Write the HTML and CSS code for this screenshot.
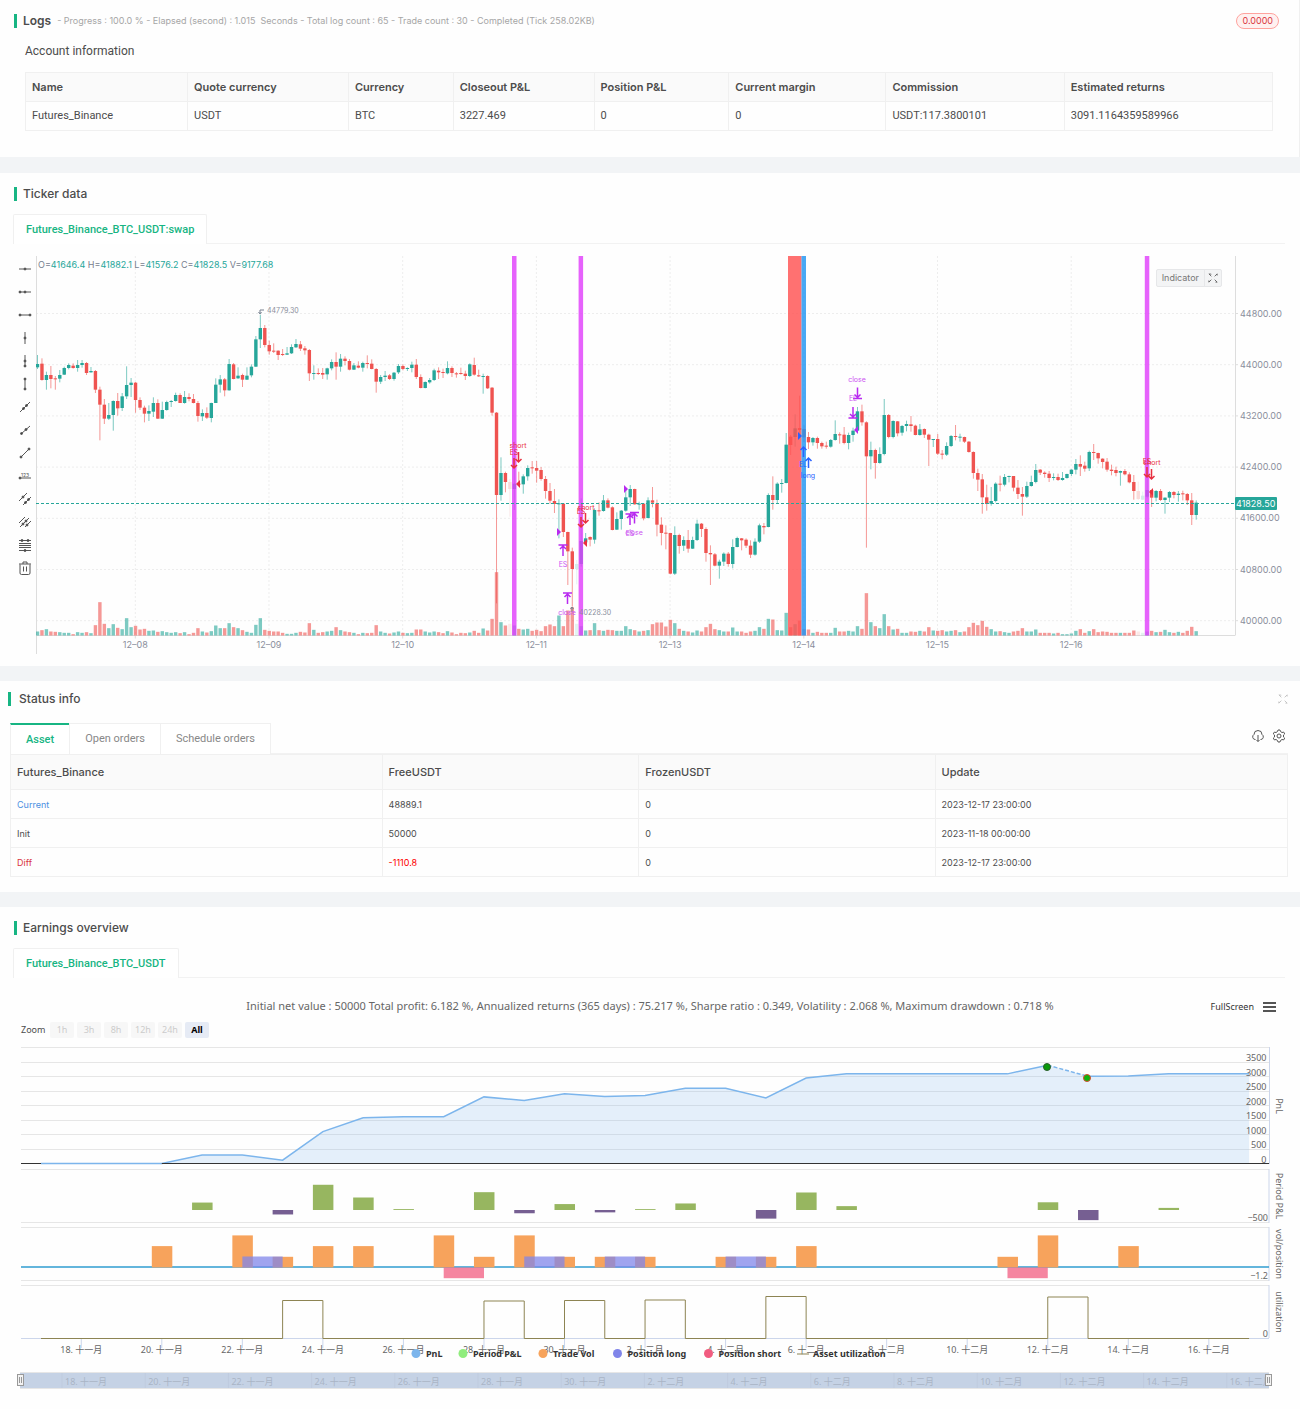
FILE: index.html
```html
<!DOCTYPE html>
<html lang="en">
<head>
  <meta charset="UTF-8">
  <title>Backtest</title>
  <link rel="stylesheet" href="styles.css">
</head>
<body>
<section class="panel logs">
  <header class="panel-head">
    <h2>Logs</h2>
    <span class="progress">- Progress : 100.0 % - Elapsed (second) : 1.015&nbsp; Seconds - Total log count : 65 - Trade count : 30 - Completed (Tick 258.02KB)</span>
    <span class="badge">0.0000</span>
  </header>
  <h3>Account information</h3>
  <table class="grid account">
    <thead>
      <tr><th>Name</th><th>Quote currency</th><th>Currency</th><th>Closeout P&amp;L</th><th>Position P&amp;L</th><th>Current margin</th><th>Commission</th><th>Estimated returns</th></tr>
    </thead>
    <tbody>
      <tr><td>Futures_Binance</td><td>USDT</td><td>BTC</td><td>3227.469</td><td>0</td><td>0</td><td>USDT:117.3800101</td><td>3091.1164359589966</td></tr>
    </tbody>
  </table>
</section>

<section class="panel ticker">
  <header class="panel-head"><h2>Ticker data</h2></header>
  <div class="tabs"><button type="button" class="tab">Futures_Binance_BTC_USDT:swap</button></div>
  <div class="chart-row">
    <div class="tools">
      <button type="button" aria-label="Horizontal line"><svg viewBox="0 0 14 14"><path d="M1 7h12"/><circle cx="7" cy="7" r="1"/></svg></button>
      <button type="button" aria-label="Horizontal ray"><svg viewBox="0 0 14 14"><path d="M1 7h12"/><circle cx="2" cy="7" r="1"/><circle cx="7" cy="7" r="1"/></svg></button>
      <button type="button" aria-label="Horizontal segment"><svg viewBox="0 0 14 14"><path d="M1 7h12"/><circle cx="2" cy="7" r="1"/><circle cx="12" cy="7" r="1"/></svg></button>
      <button type="button" aria-label="Vertical line"><svg viewBox="0 0 14 14"><path d="M7 1v12"/><circle cx="7" cy="7" r="1"/></svg></button>
      <button type="button" aria-label="Vertical ray"><svg viewBox="0 0 14 14"><path d="M7 1v12"/><circle cx="7" cy="7" r="1"/><circle cx="7" cy="12" r="1"/></svg></button>
      <button type="button" aria-label="Vertical segment"><svg viewBox="0 0 14 14"><path d="M7 1v12"/><circle cx="7" cy="2" r="1"/><circle cx="7" cy="12" r="1"/></svg></button>
      <button type="button" aria-label="Straight line"><svg viewBox="0 0 14 14"><path d="M2 12l10-10"/><circle cx="5.5" cy="8.5" r="1"/><circle cx="8.5" cy="5.5" r="1"/></svg></button>
      <button type="button" aria-label="Ray"><svg viewBox="0 0 14 14"><path d="M3 11l9-8"/><circle cx="3.5" cy="10.5" r="1"/><circle cx="8" cy="6.5" r="1"/></svg></button>
      <button type="button" aria-label="Segment"><svg viewBox="0 0 14 14"><path d="M3 11l8-8"/><circle cx="3" cy="11" r="1"/><circle cx="11" cy="3" r="1"/></svg></button>
      <button type="button" aria-label="Price line"><svg viewBox="0 0 14 14"><path d="M1 9h12"/><circle cx="2" cy="9" r="1"/><text x="3" y="8">123</text></svg></button>
      <button type="button" aria-label="Parallel lines"><svg viewBox="0 0 14 14"><path d="M1 9l8-8M5 13l8-8"/><circle cx="5" cy="5" r="1"/><circle cx="7.5" cy="10.5" r="1"/><circle cx="10.5" cy="7.5" r="1"/></svg></button>
      <button type="button" aria-label="Price channel"><svg viewBox="0 0 14 14"><path d="M1 8l6-6M2 12l9-9M7 12l6-6"/><circle cx="5" cy="9" r="1"/><circle cx="8" cy="6" r="1"/><circle cx="9" cy="10" r="1"/></svg></button>
      <button type="button" aria-label="Fibonacci lines"><svg viewBox="0 0 14 14"><path d="M1 2.5h12M1 5.5h12M1 7.5h12M1 9.5h12M1 12.5h12"/><circle cx="4" cy="2.5" r="1"/><circle cx="10" cy="2.5" r="1"/><circle cx="7" cy="12.5" r="1"/></svg></button>
      <button type="button" aria-label="Remove all"><svg viewBox="0 0 14 14"><path d="M1 3h12M5 3V1h4v2M2 3.5V12q0 1.5 1.5 1.5h7Q12 13.5 12 12V3.5M5.5 5.5v5M8.5 5.5v5"/></svg></button>
    </div>
    <svg class="kline" id="kline" viewBox="0 0 1252 400"></svg>
    <div class="chart-btns">
      <button type="button">Indicator</button>
      <button type="button" aria-label="Full screen"><svg viewBox="0 0 12 12"><path d="M1 1l3 3M4 1.5L1.500 1M11 1L8 4M11 1v2M1 11l3-3M1 11V9M11 11L8 8M11 11H9"/></svg></button>
    </div>
  </div>
</section>

<section class="panel status">
  <header class="panel-head">
    <h2>Status info</h2>
    <button type="button" class="icon-btn shrink" aria-label="Full screen"><svg viewBox="0 0 12 12"><path d="M1 1l3 3M4 1.500L1.500 1M11 1L8 4M11 1v2M1 11l3-3M1 11V9M11 11L8 8M11 11H9"/></svg></button>
  </header>
  <div class="tabs card-tabs">
    <button type="button" class="tab active">Asset</button>
    <button type="button" class="tab">Open orders</button>
    <button type="button" class="tab">Schedule orders</button>
    <div class="tab-icons">
      <button type="button" class="icon-btn" aria-label="Download"><svg viewBox="0 0 14 14"><path d="M4.5 10.5H4A2.700 2.700 0 0 1 3 5.500a4 4 0 0 1 8 0 2.700 2.700 0 0 1-1 5h-.5M7 6v6.500M5.500 11L7 12.500 8.500 11"/></svg></button>
      <button type="button" class="icon-btn" aria-label="Settings"><svg viewBox="0 0 14 14"><path d="M5.5 2.5L6 1h2l.5 1.5 1.5 1 1.700-.4 1 1.800L11.500 6v2l1.200 1.100-1 1.800-1.700-.4-1.500 1L8 13H6l-.5-1.500-1.500-1-1.700.4-1-1.800L2.500 8V6L1.300 4.900l1-1.800 1.700.4z"/><circle cx="7" cy="7" r="2"/></svg></button>
    </div>
  </div>
  <table class="grid assets">
    <thead>
      <tr><th>Futures_Binance</th><th>FreeUSDT</th><th>FrozenUSDT</th><th>Update</th></tr>
    </thead>
    <tbody>
      <tr><td class="blue">Current</td><td>48889.1</td><td>0</td><td>2023-12-17 23:00:00</td></tr>
      <tr><td>Init</td><td>50000</td><td>0</td><td>2023-11-18 00:00:00</td></tr>
      <tr><td class="red">Diff</td><td class="loss">-1110.8</td><td>0</td><td>2023-12-17 23:00:00</td></tr>
    </tbody>
  </table>
</section>

<section class="panel earnings">
  <header class="panel-head"><h2>Earnings overview</h2></header>
  <div class="tabs"><button type="button" class="tab">Futures_Binance_BTC_USDT</button></div>
  <div class="title-row">
    <p>Initial net value : 50000 Total profit: 6.182 %, Annualized returns (365 days) : 75.217 %, Sharpe ratio : 0.349, Volatility : 2.068 %, Maximum drawdown : 0.718 %</p>
    <div class="export">
      <button type="button">FullScreen</button>
      <button type="button" class="burger" aria-label="Menu"><i></i><i></i><i></i></button>
    </div>
  </div>
  <div class="range">
    <span>Zoom</span>
    <button type="button" disabled>1h</button>
    <button type="button" disabled>3h</button>
    <button type="button" disabled>8h</button>
    <button type="button" disabled>12h</button>
    <button type="button" disabled>24h</button>
    <button type="button" class="on">All</button>
  </div>
  <svg class="pnl" id="pnl" viewBox="0 0 1300 360"></svg>
</section>
<script src="script.js"></script>
</body>
</html>
```
FILE: styles.css
```css
* {
  box-sizing: border-box;
}

body {
  margin: 0;
  background: #f2f4f6;
  color: #4c4c4c;
  font: 11px/20px Inter, "Liberation Sans", sans-serif;
}

button {
  margin: 0;
  padding: 0;
  border: 0;
  background: none;
  color: inherit;
  font: inherit;
}

.panel {
  background: #fefefe;
  margin-bottom: 15px;
  padding-top: 11px;
}

.panel:last-of-type {
  margin-bottom: 0;
}

.panel-head {
  display: flex;
  align-items: center;
  height: 20px;
  margin: 0 22px 0 14px;
}

.panel-head h2 {
  margin: 0;
  font-size: 12px;
  font-weight: 500;
  line-height: 14px;
  padding-left: 6px;
  border-left: 3px solid #17b583;
}

.progress {
  margin-left: 6px;
  font-size: 9px;
  color: #a6a6a6;
}

.badge {
  margin-left: auto;
  padding: 0 5px;
  border: 1px solid #ffa39e;
  border-radius: 8px;
  background: #fff1f0;
  color: #d9363e;
  font-size: 9px;
  line-height: 14px;
}

/* logs */
.logs {
  padding-bottom: 26px;
  margin-bottom: 16px;
  border-right: 1px solid #f0f0f0;
}

.logs .panel-head h2 {
  font-weight: 600;
}

.logs .panel-head {
  margin-right: 20px;
}

.logs h3 {
  margin: 10px 25px 11px;
  font-family: Roboto, sans-serif;
  font-size: 12px;
  font-weight: 400;
  line-height: 20px;
}

.logs .grid {
  margin: 0 26px 0 25px;
  width: calc(100% - 51px);
}

/* tables */
.grid {
  border-collapse: collapse;
  table-layout: fixed;
  width: 100%;
}

.grid th,
.grid td {
  height: 29px;
  padding: 0 6px;
  border: 1px solid #f0f0f0;
  text-align: left;
  font-weight: 400;
  line-height: 14px;
}

.grid th {
  background: #fafafa;
  font-weight: 600;
}

.account td {
  font-family: Roboto, sans-serif;
}

.account th:nth-child(1) { width: 13%; }
.account th:nth-child(2) { width: 12.9%; }
.account th:nth-child(3) { width: 8.4%; }
.account th:nth-child(4) { width: 11.3%; }
.account th:nth-child(5) { width: 10.8%; }
.account th:nth-child(6) { width: 12.6%; }
.account th:nth-child(7) { width: 14.3%; }

.assets th {
  height: 35px;
  font-weight: 500;
}

.assets td {
  padding-top: 1px;
  font-size: 9px;
}

.assets th:nth-child(1) { width: 29.1%; }
.assets th:nth-child(2) { width: 20.1%; }
.assets th:nth-child(3) { width: 23.2%; }

.blue { color: #4a90e2; }
.red { color: #d9363e; }
.loss { color: #ff0000; }

/* tabs */
.tabs {
  display: flex;
  height: 30px;
  margin: 10px 15px 0 13px;
  box-shadow: inset 0 -1px #f2f2f2;
}

.tab {
  padding: 0 12px;
  border: 1px solid #f0f0f0;
  border-bottom: 0;
  border-radius: 2px 2px 0 0;
  background: #fff;
  color: #17b583;
  font-family: Roboto, sans-serif;
  font-weight: 500;
}

.card-tabs {
  height: 31px;
  margin: 14px 0 0;
}

.card-tabs .tab {
  padding: 0 15px;
  margin-right: -1px;
  border-radius: 0;
  color: #888;
  font-weight: 400;
}

.card-tabs .active {
  border-top: 2px solid #17b583;
  color: #17b583;
  font-weight: 500;
}

.tab-icons {
  display: flex;
  align-items: center;
  gap: 7px;
  margin: 0 2px 5px auto;
}

.icon-btn {
  height: 14px;
}

.icon-btn svg {
  display: block;
  width: 14px;
  height: 14px;
  fill: none;
  stroke: #555;
}

.shrink {
  margin-left: auto;
}

.shrink svg {
  width: 10px;
  stroke: #bbb;
}

.status {
  padding: 8px 12px 15px 10px;
}

.status .panel-head {
  margin: 0 0 0 -2px;
}

.status .panel-head h2 {
  padding-left: 8px;
}

/* candle chart */
.chart-row {
  position: relative;
  display: flex;
  margin: 12px 12px 0 18px;
  padding-bottom: 10px;
}

.tools {
  flex: none;
  width: 18px;
  padding-top: 6px;
}

.tools button {
  display: block;
  width: 14px;
  height: 14px;
  margin-bottom: 9px;
}

.tools svg {
  display: block;
  width: 14px;
  height: 14px;
  fill: none;
  stroke: #555;
}

.tools circle {
  fill: #444;
}

.tools text {
  fill: #555;
  stroke: none;
  font-size: 5px;
}

.kline {
  display: block;
  flex: 1;
  min-width: 0;
  font-size: 9px;
}

.chart-btns {
  position: absolute;
  top: 13px;
  right: 66px;
  display: flex;
  border: 1px solid #e6e7e9;
  border-radius: 2px;
  background: #f3f4f5;
  color: #777;
  font-size: 9px;
  line-height: 16px;
}

.chart-btns button {
  padding: 0 5px;
  height: 16px;
}

.chart-btns button + button {
  border-left: 1px solid #e6e7e9;
  padding: 0 3px;
}

.chart-btns svg {
  display: block;
  width: 10px;
  height: 10px;
  fill: none;
  stroke: #555;
}

.up { fill: #26a69a; }
.down { fill: #ef5350; }
.wick { opacity: .6; }
.vol { opacity: .6; }
.faded { opacity: .2; }
.hgrid { stroke: #ededed; stroke-dasharray: 2 2; }
.axis { stroke: #dddddd; }
.axis-text { fill: #8a8e9c; }
.peak { font-size: 7px; }
.last-line { stroke: #26a69a; stroke-dasharray: 3 2; }
.last-tag { fill: #26a69a; }
.last-text { fill: #fff; }
.ohlc { fill: #26a69a; }
.ohlc .k { fill: #76808f; }
.band-m { fill: #e040fb; opacity: .82; }
.band-r { fill: #ff5252; opacity: .82; }
.band-b { fill: #2196f3; opacity: .82; }
.mark { fill: none; stroke-width: 1.5; }
.mark-text { font-size: 7px; text-anchor: middle; }
.s-red { stroke: #e8303f; }
.s-violet { stroke: #b82af0; }
.s-blue { stroke: #2962ff; }
.f-red { fill: #e8303f; }
.f-violet { fill: #b82af0; }
.f-blue { fill: #2962ff; }
.mark-text.f-violet { fill: #cc55f2; }

/* earnings chart */
.earnings {
  padding-bottom: 9px;
}

.title-row,
.range,
.pnl {
  font-family: "Noto Sans", "Noto Sans CJK SC", sans-serif;
}

.title-row {
  position: relative;
  margin-top: 18px;
}

.title-row p {
  margin: 0;
  text-align: center;
  font-size: 11px;
  color: #666;
}

.export {
  position: absolute;
  top: 1px;
  right: 24px;
  display: flex;
  align-items: center;
  gap: 9px;
  color: #333;
  font-size: 9px;
}

.burger {
  display: flex;
  flex-direction: column;
  gap: 2px;
}

.burger i {
  width: 13px;
  height: 2px;
  background: #555;
}

.range {
  display: flex;
  gap: 3px;
  margin: 6px 21px 2px;
  font-size: 9px;
  line-height: 16px;
}

.range span {
  width: 26px;
}

.range button {
  width: 24px;
  height: 16px;
  border-radius: 2px;
  background: #f7f7f7;
  color: #ccc;
}

.range .on {
  background: #e6ebf5;
  color: #000;
  font-weight: 700;
}

.pnl {
  display: block;
  width: 100%;
  font-size: 9px;
  fill: #666;
}

.mid { text-anchor: middle; }
.end { text-anchor: end; }
.grid-line { stroke: #e6e6e6; }
.y-line { stroke: #ccd6eb; }
.zero { stroke: #333; }
.area { fill: #7cb5ec; opacity: .2; }
.line { fill: none; stroke: #7cb5ec; stroke-width: 1.5; }
.dash { stroke-dasharray: 4 2; }
.gain { fill: #97b660; }
.lose { fill: #765f92; }
.trade { fill: #f7a35c; }
.long { fill: #8085e9; opacity: .75; }
.short { fill: #f15c80; opacity: .75; }
.vol-zero { stroke: #2f9dd0; stroke-width: 1.5; }
.util { fill: none; stroke: #8d8453; }
.legend { font-weight: 700; fill: #333; }
.nav { fill: #c5d2e5; }
.nav-text { fill: #aab5c5; }
.nav-line { stroke: #bfcbde; }
.handle { fill: #f2f2f2; stroke: #999; }
.grip { stroke: #999; }
```
FILE: script.js
```js
const add = (parent, tag, attrs, text) => {
  const el = document.createElementNS("http://www.w3.org/2000/svg", tag);
  for (const key in attrs) el.setAttribute(key, attrs[key]);
  if (text !== undefined) el.textContent = text;
  parent.appendChild(el);
  return el;
};

const line = (parent, x1, y1, x2, y2, cls) => add(parent, "line", { x1, y1, x2, y2, class: cls });
const rect = (parent, x, y, width, height, cls) => add(parent, "rect", { x, y, width, height, class: cls });
const text = (parent, x, y, cls, str) => add(parent, "text", { x, y, class: cls }, str);

/* ---------- candles ---------- */

// open close high low volume, in thirds of a pixel (smaller is a higher price)
const candles = `
367 357 330 372 12|356 405 340 407 16|405 390 380 434 19|390 402 363 430 12|400 401 393 434 11|401 390 375 412 10
389 369 365 390 8|369 360 355 373 8|362 369 355 371 4|369 360 345 380 10|360 354 345 368 8|354 384 351 390 10
382 378 366 383 7|378 434 375 444 31|434 479 425 586 100|479 521 462 537 35|521 510 474 525 22|510 468 466 557 34
468 490 444 512 23|489 454 444 498 19|454 420 364 462 52|420 413 399 456 25|413 465 411 503 29|465 488 457 495 18
488 506 482 532 20|506 498 481 528 14|500 474 457 516 15|474 521 463 522 11|521 495 470 522 13|495 471 467 497 10
470 468 465 486 8|468 450 443 470 10|450 474 445 474 7|474 456 438 476 10|456 462 445 469 4|462 474 447 475 8
474 513 468 530 22|514 504 493 528 12|504 518 487 522 9|519 474 473 532 13|474 419 400 474 30|419 403 390 443 22
403 436 399 454 22|436 357 342 437 37|358 402 354 403 25|400 392 367 402 22|390 404 386 426 16|404 392 367 405 11
391 365 358 397 8|365 283 273 366 32|283 249 209 309 52|249 300 240 307 17|300 319 287 329 14|317 320 295 324 12
317 330 316 345 12|327 330 312 333 8|329 325 306 330 5|325 306 298 327 5|307 297 282 309 8|298 311 288 318 11
310 316 303 329 9|315 385 312 408 37|387 384 361 404 17|384 386 370 390 8|384 389 369 402 10|388 370 368 404 12
370 351 343 376 14|351 365 322 404 25|365 341 327 380 16|341 348 334 361 12|348 374 342 376 10|374 361 354 375 8
362 368 349 370 4|368 354 350 380 8|354 356 331 370 7|356 372 343 373 8|372 410 369 443 31|410 396 390 417 12
396 392 378 408 8|391 402 387 405 6|402 383 381 407 9|382 363 357 387 12|363 372 358 376 8|372 369 367 378 7
369 359 350 382 8|359 396 342 402 18|396 429 388 430 18|429 411 409 430 12|412 405 399 416 9|405 376 371 408 12
377 382 367 402 10|381 384 371 399 7|385 369 349 388 13|369 384 364 396 9|385 387 381 398 4|384 386 368 389 8
386 393 377 405 7|393 358 355 396 9|360 389 338 392 14|391 394 374 396 8|395 393 386 446 21|393 430 391 432 15
428 503 426 512 50|503 750 501 1075 190|750 684 637 767 40|684 711 680 742 30|711 732 702 815 35|732 716 590 795 30
716 718 680 720 20|718 694 688 746 18|694 669 661 707 20|667 669 648 686 14|669 677 648 713 17|675 702 666 707 13
702 738 693 761 28|738 767 714 776 33|768 777 732 804 28|777 775 763 880 60|776 861 776 876 28|861 919 860 1020 75
919 972 908 1085 85|972 957 945 1018 35|957 888 760 965 28|892 880 864 893 15|876 884 874 904 16|884 795 790 896 37
796 798 772 812 16|798 766 750 800 14|766 788 760 790 17|787 855 784 856 16|854 822 802 855 14|822 797 795 854 14
797 757 733 800 28|757 732 720 783 19|732 778 731 779 16|778 776 770 794 12|776 820 774 826 14|819 766 757 820 16
766 773 726 787 34|776 839 764 874 39|839 864 817 901 39|863 866 841 913 27|864 986 864 988 47|986 870 844 990 37
870 903 866 926 20|902 885 874 918 14|885 911 855 923 12|911 885 875 912 9|885 836 824 888 15|836 852 834 876 12
852 924 847 950 25|924 928 901 1020 35|928 962 924 964 19|962 950 944 1001 16|950 926 922 963 12|926 957 921 965 12
957 906 883 970 24|906 879 875 907 12|880 886 879 916 12|884 902 880 909 8|902 929 886 939 12|929 890 880 932 14
890 841 836 894 25|843 847 834 868 20|846 750 745 847 50|750 765 694 794 48|765 716 712 776 16|716 714 702 743 15
714 599 564 715 68|575 600 570 630 25|576 550 508 605 34|549 555 452 575 45|552 577 541 592 19|576 592 561 612 18
592 579 576 602 8|579 594 575 611 11|594 604 590 611 8|602 605 590 611 8|605 585 582 608 8|585 567 526 587 23
568 570 562 596 12|569 594 546 598 12|594 570 563 613 14|570 557 548 590 12|557 499 486 560 28|499 532 479 542 20
532 634 529 908 127|634 615 590 673 40|615 654 611 701 28|654 627 607 656 22|627 510 462 631 64|510 576 507 580 28
576 528 526 580 18|529 565 528 574 20|563 543 540 572 8|543 537 527 559 8|538 543 513 560 12|542 570 539 571 11
570 553 537 572 14|552 569 550 579 12|569 584 566 663 25|584 582 582 606 15|582 626 567 630 14|626 629 615 643 16
629 603 592 633 12|603 573 570 606 14|573 576 540 586 16|577 575 566 590 10|576 590 575 594 12|590 621 588 623 25
621 684 619 701 38|684 704 671 738 31|703 757 687 806 44|757 777 719 797 26|776 768 726 782 19|768 716 712 772 12
716 719 692 739 13|719 696 687 724 10|696 693 692 712 8|693 728 693 739 12|728 747 705 762 14|747 755 726 812 22
755 723 710 759 12|723 711 692 725 12|711 675 657 715 18|674 683 672 690 8|683 687 679 698 8|686 699 678 711 8
699 696 685 706 6|696 705 686 708 8|705 699 681 707 4|699 687 686 701 4|687 674 673 693 6|674 657 642 688 14
657 665 631 693 19|662 671 650 680 8|670 621 617 678 13|621 624 597 645 19|624 640 623 656 10|641 651 640 670 12
650 674 639 680 11|674 678 659 691 8|675 684 665 694 8|683 678 677 722 8|678 688 672 691 8|688 712 682 715 8
711 738 690 764 15|738 762 710 765 12|764 752 740 765 8|755 735 615 760 12|735 758 735 786 14|758 738 735 769 10
738 765 732 768 11|765 758 757 806 17|758 741 738 771 10|741 750 738 760 8|750 746 738 770 11|745 748 737 766 8
747 766 744 780 14|766 810 744 840 26|810 773 766 824 13`
  .trim().split(/[|\n]/).map(row => row.split(" ").map(Number));

const faded = [106, 121, 247, 248];
const STEP = 4.4565;
const FLOOR = 379.5;
const kline = document.querySelector("#kline");
const py = v => v / 3 - 11;

const drawKline = () => {
  // grid and axes
  for (let i = 0; i < 7; i++) {
    const y = 57.5 + i * 51.2;
    line(kline, 0, y, 1199, y, "hgrid");
    line(kline, 1199, y, 1202, y, "axis");
    text(kline, 1204, y + 3, "axis-text", (44800 - i * 800) + ".00");
  }
  ["08", "09", "10", "11", "13", "14", "15", "16"].forEach((d, i) => {
    const x = 99.3 + i * 133.7;
    line(kline, x, 0, x, FLOOR, "hgrid");
    line(kline, x, FLOOR, x, FLOOR + 3, "axis");
    text(kline, x, 392, "axis-text mid", "12\u2013" + d);
  });
  line(kline, 0, FLOOR, 1199, FLOOR, "axis");
  line(kline, 0.5, 0, 0.5, 398, "axis");
  line(kline, 1199.5, 0, 1199.5, FLOOR, "axis");

  candles.forEach(([open, close, high, low, vol], i) => {
    const x = 1.5 + i * STEP;
    const dir = open > close ? "up" : "down";
    const g = add(kline, "g", { class: dir + (faded.includes(i) ? " faded" : "") });
    rect(g, x - 1.7, FLOOR - vol / 3, 3.4, vol / 3, "vol");
    rect(g, x - 0.5, py(high), 1, (low - high) / 3, "wick");
    rect(g, x - 1.7, py(Math.min(open, close)), 3.4, Math.max(Math.abs(open - close) / 3, 1), "body");
  });

  rect(kline, 476, 0, 4.5, FLOOR, "band-m");
  rect(kline, 542.6, 0, 4.5, FLOOR, "band-m");
  rect(kline, 752, 0, 13.5, FLOOR, "band-r");
  rect(kline, 765.5, 0, 4.5, FLOOR, "band-b");
  rect(kline, 1108.8, 0, 4.5, FLOOR, "band-m");

  line(kline, 0, 247.5, 1199, 247.5, "last-line");
  add(kline, "rect", { x: 1199, y: 241, width: 42, height: 13, rx: 1, class: "last-tag" });
  text(kline, 1200, 251, "last-text", "41828.50");

  const legend = add(kline, "text", { x: 2, y: 12, class: "ohlc" });
  [["O", "41646.4"], ["H", "41882.1"], ["L", "41576.2"], ["C", "41828.5"], ["V", "9177.68"]].forEach(([k, v]) => {
    add(legend, "tspan", { class: "k" }, k + "=");
    add(legend, "tspan", {}, v + " ");
  });

  // highest and lowest price
  const peak = { fill: "none", stroke: "#76808f" };
  add(kline, "path", { d: "M224 57v-3h4M222.5 56l1.5 2 1.5-2", ...peak });
  text(kline, 231, 57, "axis-text peak", "44779.30");
  add(kline, "path", { d: "M536 351v5M534.5 353l1.5-2 1.5 2", ...peak });
  text(kline, 543, 359, "axis-text peak", "40228.30");

  // arrows: x, y of the head, direction, colour, bar at the head
  [
    [478, 213, 1, "red"], [482.5, 207, 1, "red"],
    [545, 272, 1, "red"], [549.5, 268, 1, "red"],
    [527, 289, -1, "violet", 1], [531.5, 337, -1, "violet", 1],
    [594, 258, -1, "violet", 1], [598.5, 256.5, -1, "violet", 1],
    [817, 162, 1, "violet", 1], [821.5, 142.5, 1, "violet", 1],
    [767.5, 190, -1, "blue"], [772.5, 201, -1, "blue"],
    [1111, 222, 1, "red"], [1115.5, 224, 1, "red"],
  ].forEach(([x, y, dir, color, bar]) => {
    let d = `M${x} ${y - dir * 11}V${y - dir}M${x - 3} ${y - dir * 4}L${x} ${y - dir}L${x + 3} ${y - dir * 4}`;
    if (bar) d += `M${x - 4.5} ${y}h9`;
    add(kline, "path", { d, class: "mark s-" + color });
  });

  // fill price pointers
  [
    [480, 228, 1, "red"], [547, 287, 1, "red"], [1113, 236, 1, "red"],
    [525, 276, -1, "violet"], [592, 233, -1, "violet"], [818, 174, 1, "violet"], [766, 180, -1, "blue"],
  ].forEach(([x, y, dir, color]) => {
    add(kline, "path", { d: `M${x} ${y}l${dir * 4} -4v8z`, class: "f-" + color });
  });

  [
    [482, 192, "red", "short"], [478, 199, "red", "ES"],
    [550, 254, "red", "short"], [545, 258, "red", "ES"],
    [527, 311, "violet", "ES"], [531, 359, "violet", "close"],
    [598, 279, "violet", "close"], [594, 280, "violet", "ES"],
    [821, 126, "violet", "close"], [817, 145, "violet", "EL"],
    [767, 211, "blue", "EL"], [772, 222, "blue", "long"],
    [1111, 208, "red", "ES"], [1116, 209, "red", "short"],
  ].forEach(([x, y, color, str]) => text(kline, x, y, "mark-text f-" + color, str));
};

/* ---------- earnings ---------- */

const pnl = document.querySelector("#pnl");
const pnlData = [0, 0, 0, 0, 290, 290, 116, 1100, 1577, 1612, 1612, 2297, 2175, 2401, 2309, 2343, 2598, 2598, 2262, 2945,
  3091, 3091, 3091, 3091, 3091, 3390, 3005, 3015, 3091, 3091, 3091];
const period = { 4: 290, 6: -174, 7: 984, 8: 487, 9: 35, 11: 695, 12: -127, 13: 231, 14: -92, 15: 34, 16: 255, 18: -336,
  19: 683, 20: 151, 25: 301, 26: -395, 28: 82 };
const trades = { 3: 2, 5: 3, 6: 1, 7: 2, 8: 2, 10: 3, 11: 1, 12: 3, 13: 1, 14: 1, 15: 1, 17: 1, 18: 1, 19: 2, 24: 1, 25: 3, 27: 2 };
const longs = [5, 12, 14, 17];
const shorts = [10, 24];
const used = { 6: 38, 11: 37.5, 13: 38, 15: 38.5, 18: 42, 25: 41.5 };
const days = ["18. 十一月", "20. 十一月", "22. 十一月", "24. 十一月", "26. 十一月", "28. 十一月", "30. 十一月",
  "2. 十二月", "4. 十二月", "6. 十二月", "8. 十二月", "10. 十二月", "12. 十二月", "14. 十二月", "16. 十二月"];

const L = 21;
const R = 1269;
const dx = n => 41 + n * 40.27;
const vy = v => 123.5 - v / 500 * 14.5;

const drawPnl = () => {
  line(pnl, L, 7.5, R, 7.5, "grid-line");
  for (let v = 500; v <= 3500; v += 500) line(pnl, L, Math.floor(vy(v)) + 0.5, R, Math.floor(vy(v)) + 0.5, "grid-line");
  [129.5, 182.5, 187.5, 240.5, 245.5].forEach(y => line(pnl, L, y, R, y, "grid-line"));
  line(pnl, R + 0.5, 7, R + 0.5, 124, "y-line");
  [[129, 183], [187, 241], [245, 298]].forEach(([a, b]) => line(pnl, R, a, R, b, "y-line"));

  // PnL
  const pts = pnlData.map((v, n) => `${dx(n)},${vy(v)}`);
  line(pnl, L, 123.5, R, 123.5, "zero");
  add(pnl, "polygon", { points: `${dx(0)},123.5 ${pts.join(" ")} ${dx(30)},123.5`, class: "area" });
  add(pnl, "polyline", { points: pts.slice(0, 26).join(" "), class: "line" });
  add(pnl, "polyline", { points: pts.slice(25, 27).join(" "), class: "line dash" });
  add(pnl, "polyline", { points: pts.slice(26).join(" "), class: "line" });
  line(pnl, dx(3), 123.5, R, 123.5, "zero");
  add(pnl, "circle", { cx: 1047, cy: 27, r: 3.5, fill: "#0a9a0a", stroke: "#2b5d2b" });
  add(pnl, "circle", { cx: 1087, cy: 38, r: 3.5, fill: "#0db50d", stroke: "#d9472b" });
  for (let v = 0; v <= 3500; v += 500) text(pnl, 1266.5, vy(v) - 1, "end", v);

  // period P&L
  for (const n in period) {
    const h = Math.abs(period[n]) / 39;
    rect(pnl, dx(+n) - 10, period[n] > 0 ? 170 - h : 170, 20.5, h, period[n] > 0 ? "gain" : "lose");
  }
  text(pnl, 1268, 181, "end", "\u2212500");

  // volume and position
  line(pnl, L, 227, R, 227, "vol-zero");
  for (const n in trades) rect(pnl, dx(+n) - 10, 227.5 - trades[n] * 10.7, 20.5, trades[n] * 10.7, "trade");
  longs.forEach(n => rect(pnl, dx(n), 216.5, 40.3, 11, "long"));
  shorts.forEach(n => rect(pnl, dx(n), 227.5, 40.3, 10.7, "short"));
  text(pnl, 1268, 239, "end", "\u22121.2");

  // utilization
  line(pnl, L, 298.5, R, 298.5, "y-line");
  let d = `M${dx(0)} 298.5`;
  for (const n in used) d += `H${dx(+n)}V${298.5 - used[n]}H${dx(+n + 1)}V298.5`;
  add(pnl, "path", { d: d + `H${dx(30)}`, class: "util" });
  text(pnl, 1268, 297, "end", "0");

  days.forEach((day, i) => {
    line(pnl, dx(1 + i * 2), 299, dx(1 + i * 2), 308, "y-line");
    text(pnl, dx(1 + i * 2), 313, "mid", day);
  });

  [["PnL", 66], ["Period P&L", 156], ["vol/position", 214], ["utilization", 272]].forEach(([name, y]) => {
    add(pnl, "text", { transform: `translate(1276 ${y}) rotate(90)`, class: "mid" }, name);
  });

  [[416, "#7cb5ec", "PnL"], [463, "#90ed7d", "Period P&L"], [543, "#f7a35c", "Trade Vol"],
    [617.5, "#8085e9", "Position long"], [708.5, "#f15c80", "Position short"]].forEach(([x, fill, name]) => {
    add(pnl, "circle", { cx: x, cy: 313.5, r: 4.5, fill });
    text(pnl, x + 10, 317, "legend", name);
  });
  line(pnl, 797, 314, 809, 314, "util");
  text(pnl, 813, 317, "legend", "Asset utilization");

  // navigator
  rect(pnl, 20, 333, 1249, 15, "nav");
  line(pnl, 20, 332.5, R, 332.5, "grid-line");
  line(pnl, 20, 348.5, R, 348.5, "grid-line");
  days.forEach((day, i) => {
    line(pnl, 62 + i * 83.2, 333, 62 + i * 83.2, 348, "nav-line");
    text(pnl, 65 + i * 83.2, 345, "nav-text", day);
  });
  [20.5, 1268.5].forEach(x => {
    rect(pnl, x - 3, 334.5, 6, 11, "handle");
    line(pnl, x - 1, 337, x - 1, 343, "grip");
    line(pnl, x + 1, 337, x + 1, 343, "grip");
  });
};

drawKline();
drawPnl();
```
